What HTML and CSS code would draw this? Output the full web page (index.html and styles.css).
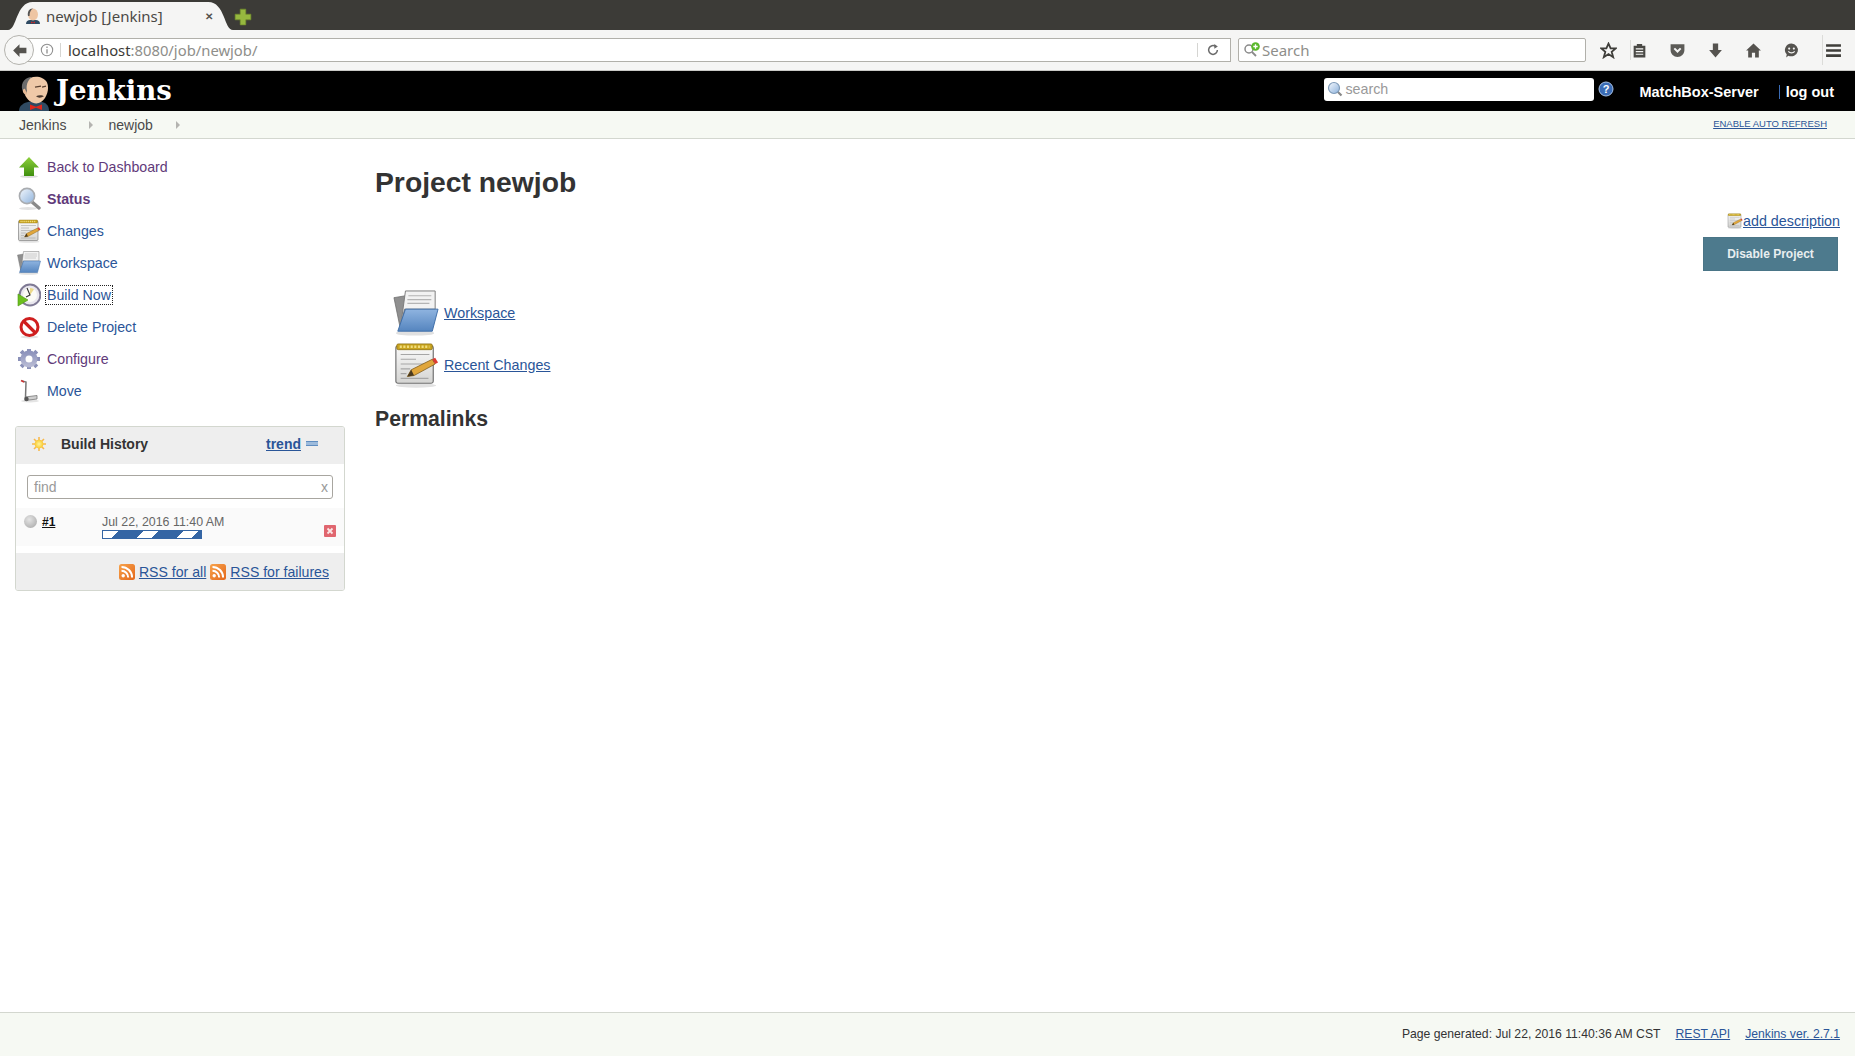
FILE: index.html
```html
<!DOCTYPE html>
<html lang="en">
<head>
    <meta charset="UTF-8">
    <title>newjob [Jenkins]</title>
    <link rel="stylesheet" href="styles.css">
</head>
<body>

  <!-- Shared icons -->
  <svg class="icon-defs" aria-hidden="true">
    <defs>
      <linearGradient id="g-green" x1="0" y1="0" x2="0" y2="1"><stop offset="0" stop-color="#8ed13c"/><stop offset="1" stop-color="#3f8f0e"/></linearGradient>
      <linearGradient id="g-folder" x1="0" y1="0" x2="0" y2="1"><stop offset="0" stop-color="#8fb4e0"/><stop offset="1" stop-color="#5585bf"/></linearGradient>
      <linearGradient id="g-glass" x1="0" y1="0" x2="1" y2="1"><stop offset="0" stop-color="#f4f8fd"/><stop offset="1" stop-color="#8db2dc"/></linearGradient>
      <linearGradient id="g-paper" x1="0" y1="0" x2="0" y2="1"><stop offset="0" stop-color="#fafafa"/><stop offset="1" stop-color="#d4d4d2"/></linearGradient>
      <linearGradient id="g-rss" x1="0" y1="0" x2="1" y2="1"><stop offset="0" stop-color="#f7a24b"/><stop offset="1" stop-color="#e4691c"/></linearGradient>
      <linearGradient id="g-gear" x1="0" y1="0" x2="0" y2="1"><stop offset="0" stop-color="#8f95bd"/><stop offset="1" stop-color="#b5b8d2"/></linearGradient>
      <radialGradient id="g-sun" cx=".5" cy=".5" r=".5"><stop offset="0" stop-color="#fff59a"/><stop offset="1" stop-color="#f8c830"/></radialGradient>

      <symbol id="i-up" viewBox="0 0 24 24">
        <ellipse cx="12" cy="21.5" rx="9" ry="1.5" fill="#ddd"/>
        <path d="M12 2 22 12.5H17V21H7V12.5H2Z" fill="url(#g-green)"/>
      </symbol>
      <symbol id="i-search" viewBox="0 0 24 24">
        <ellipse cx="11" cy="21.5" rx="9" ry="1.5" fill="#e2e2e2"/>
        <path d="M14.5 14.5 22 21" stroke="#8a8a8a" stroke-width="3.4" stroke-linecap="round"/>
        <circle cx="10" cy="9" r="7.6" fill="url(#g-glass)" stroke="#a9acb0" stroke-width="1.6"/>
      </symbol>
      <symbol id="i-notepad" viewBox="0 0 48 48">
        <ellipse cx="24" cy="45.5" rx="21" ry="2.2" fill="#e2e2e2"/>
        <rect x="3" y="4" width="39" height="39" rx="2" fill="url(#g-paper)" stroke="#6f6f6f" stroke-width="1.2"/>
        <rect x="4" y="2" width="37" height="6" rx="1.5" fill="#c9a520" stroke="#8a6d10" stroke-width=".8"/>
        <path d="M7 5H38" stroke="#f1dd7d" stroke-width="2.6" stroke-dasharray="2.2 1.6"/>
        <path d="M8 13H38M8 18H24M8 23H34M8 28H18M8 33H14M8 38H37" stroke="#a6a6a6" stroke-width="1.2"/>
        <path d="M19 29 41 18 44 23 22 35 15 36Z" fill="#e0a63c" stroke="#7d5a1a" stroke-width=".8"/>
        <path d="M41 18 44 16.500 47 21.500 44 23Z" fill="#dc3a32"/>
        <path d="M19 29 15 36 22 35Z" fill="#4a3a20"/>
      </symbol>
      <symbol id="i-folder" viewBox="0 0 48 48">
        <ellipse cx="23" cy="45" rx="20" ry="2.6" fill="#e0e0e0"/>
        <path d="M1 8 13 6V40L8 42Z" fill="#8f8f8f" stroke="#6c6c6c" stroke-width=".8"/>
        <path d="M8 38 13 1H44V20H12Z" fill="#f2f2f2" stroke="#7b7b7b" stroke-width="1"/>
        <path d="M16 6H40M15 10H40M15 14H38" stroke="#b4b4b4" stroke-width="1.2"/>
        <path d="M13 20H47L41 43H5Z" fill="url(#g-folder)" stroke="#3f6ea8" stroke-width="1"/>
      </symbol>
      <symbol id="i-clock" viewBox="0 0 24 24">
        <circle cx="13" cy="12" r="10.4" fill="#e9e7ee" stroke="#7f7a95" stroke-width="2"/>
        <circle cx="13" cy="12" r="7" fill="#fbfbf6"/>
        <path d="M13 12V5A7 7 0 0 1 17 6.300Z" fill="#ecd98a"/>
        <path d="M10 5 13 12 9 14" fill="none" stroke="#333" stroke-width="1.1"/>
        <path d="M1 11 11 17 1 23Z" fill="#6cbf1f" stroke="#4f9711" stroke-width=".6"/>
      </symbol>
      <symbol id="i-delete" viewBox="0 0 24 24">
        <ellipse cx="12.500" cy="22" rx="9" ry="1.500" fill="#e4e4e4"/>
        <circle cx="12.500" cy="12" r="8.500" fill="#fff" stroke="#cf1f1f" stroke-width="3"/>
        <path d="M6.500 6 18.500 18" stroke="#cf1f1f" stroke-width="3.200"/>
      </symbol>
      <symbol id="i-gear" viewBox="0 0 24 24">
        <path d="M12 4V2M12 22V20M4 12H1M23 12H20M6.300 6.300 4.200 4.200M19.800 19.800 17.700 17.700M6.300 17.700 4.200 19.800M19.800 4.200 17.700 6.300" stroke="#8a90b8" stroke-width="4"/>
        <circle cx="12" cy="12" r="6" fill="none" stroke="url(#g-gear)" stroke-width="5"/>
        <circle cx="12" cy="12" r="3" fill="#fff"/>
      </symbol>
      <symbol id="i-move" viewBox="0 0 24 24">
        <ellipse cx="13" cy="22" rx="9" ry="1.500" fill="#e4e4e4"/>
        <path d="M5 2 9 3 8.500 18" fill="none" stroke="#777" stroke-width="1.500"/>
        <path d="M4 1.500 7 3" stroke="#c33" stroke-width="1.500"/>
        <path d="M8 18 20 16.500V20L8 21.500Z" fill="#cfcfcf" stroke="#777" stroke-width=".8"/>
        <circle cx="9.500" cy="20" r="2.200" fill="#555"/>
      </symbol>
      <symbol id="i-rss" viewBox="0 0 16 16">
        <rect width="16" height="16" rx="2.500" fill="url(#g-rss)"/>
        <circle cx="4.200" cy="11.800" r="1.700" fill="#fff"/>
        <path d="M2.500 6.800A6.700 6.700 0 0 1 9.200 13.500M2.500 2.900A10.600 10.600 0 0 1 13.100 13.500" fill="none" stroke="#fff" stroke-width="2"/>
      </symbol>
    </defs>
  </svg>

  <!-- Browser Chrome -->
  <div class="tabstrip">
    <div class="tab">
      <svg class="tab-shape" viewBox="0 0 200 28" preserveAspectRatio="none"><path d="M0 28C8 28 7 0 22 0H178C193 0 192 28 200 28Z" fill="#f5f5f4"/></svg>
      <svg class="tab-favicon" viewBox="0 0 16 16"><path d="M1 16C1 13 3 12 5 12H11C13 12 15 13 15 16Z" fill="#2f4a62"/><ellipse cx="8" cy="6.500" rx="5" ry="6" fill="#eec5a3"/><path d="M3 8C2 3 5 0 8 .5 6 1.500 4.500 4 4.500 8Z" fill="#555"/><path d="M6 13.500 8 14.500 10 13.500V15.500L8 14.800 6 15.500Z" fill="#c62828"/></svg>
      <span class="tab-title">newjob [Jenkins]</span>
      <span class="tab-close">&#10005;</span>
    </div>
    <svg class="tab-new" viewBox="0 0 16 16"><path d="M5.500 1H10.500V5.500H15V10.500H10.500V15H5.500V10.500H1V5.500H5.500Z" fill="#96b83f" stroke="#6f8b2a" stroke-width=".6"/></svg>
  </div>

  <div class="toolbar">
    <div class="back-btn">
      <svg viewBox="0 0 16 16"><path d="M8 2 2 8 8 14V10.500H14.500V5.500H8Z" fill="#55534f"/></svg>
    </div>
    <div class="urlbar">
      <svg class="url-info" viewBox="0 0 16 16"><circle cx="8" cy="8" r="6.500" fill="none" stroke="#8f8f8f" stroke-width="1.200"/><path d="M8 7V12M8 4V5.600" stroke="#8f8f8f" stroke-width="1.500"/></svg>
      <span class="url-text">localhost<span class="url-rest">:8080/job/newjob/</span></span>
      <svg class="url-reload" viewBox="0 0 16 16"><path d="M13 8A5 5 0 1 1 11 4" fill="none" stroke="#6a6a6a" stroke-width="1.700"/><path d="M9.500 1 13.500 4 9.500 6.500Z" fill="#6a6a6a"/></svg>
    </div>
    <div class="searchbar">
      <svg class="search-engine" viewBox="0 0 18 16"><circle cx="6" cy="7" r="4" fill="none" stroke="#8a8a8a" stroke-width="1.500"/><path d="M9 10 13 14" stroke="#8a8a8a" stroke-width="1.800"/><circle cx="12.500" cy="4.500" r="4.300" fill="#5ab82b"/><path d="M12.500 2.300V6.700M10.300 4.500H14.700" stroke="#fff" stroke-width="1.300"/></svg>
      <span>Search</span>
    </div>
    <div class="toolbar-icons">
      <svg viewBox="0 0 16 16"><path d="M8 1.500 10 6H14.800L11 9.200 12.400 14.300 8 11.400 3.600 14.300 5 9.200 1.200 6H6Z" fill="none" stroke="#3f3e3a" stroke-width="1.700"/></svg>
      <span class="toolbar-sep"></span>
      <svg viewBox="0 0 16 16"><path d="M2.500 3.500H5.500V1.800H10.500V3.500H13.500V14.500H2.500Z" fill="#4a4945"/><path d="M4.500 6.500H11.500M4.500 9H11.500M4.500 11.500H11.500" stroke="#f5f5f4" stroke-width="1.100"/></svg>
      <svg viewBox="0 0 16 16"><path d="M1.500 2H14.500V7.500C14.500 11.500 11.500 14 8 14S1.500 11.500 1.500 7.500Z" fill="#5c5b57"/><path d="M5 6 8 9 11 6" fill="none" stroke="#f5f5f4" stroke-width="1.900"/></svg>
      <svg viewBox="0 0 16 16"><path d="M5.500 1.500H10.500V7.500H14L8 14.500 2 7.500H5.500Z" fill="#55534f"/></svg>
      <svg viewBox="0 0 16 16"><path d="M8 1.500 15 8H13V14.500H9.500V10H6.500V14.500H3V8H1Z" fill="#55534f"/></svg>
      <svg viewBox="0 0 16 16"><path d="M8 1.500A6.500 6 0 1 1 5 13L3 14.500 3.500 11.500A6.500 6 0 0 1 8 1.500Z" fill="#55534f"/><circle cx="5.800" cy="6.200" r="1" fill="#f5f5f4"/><circle cx="10.200" cy="6.200" r="1" fill="#f5f5f4"/><path d="M5 8.800C6.500 10.800 9.500 10.800 11 8.800" fill="none" stroke="#f5f5f4" stroke-width="1.100"/></svg>
      <span class="toolbar-sep toolbar-sep-wide"></span>
      <svg viewBox="0 0 16 16"><path d="M1 3.200H15M1 8H15M1 12.800H15" stroke="#3f3e3a" stroke-width="2.400"/></svg>
    </div>
  </div>

  <!-- Jenkins Header -->
  <header class="page-head">
    <a class="logo" href="#">
      <svg class="logo-head" viewBox="1 2 32 38" preserveAspectRatio="none">
        <path d="M2 40C2 34 7 31 12 30L24 30C29 31 32 34 32 40Z" fill="#2f4a62"/>
        <path d="M9 8C13 1 26 1 30 9 32 14 31 21 28 26 25 31 20 33 16 31 11 29 8 24 7 19Z" fill="#efc9a8"/>
        <path d="M9 22C4 20 3 9 9 5 12 3 14 3 15 3 10 7 9 13 10 18Z" fill="#6b6b6b"/>
        <path d="M8 16C6 15 5 19 7 21 8 22 9 22 10 21Z" fill="#e5b894"/>
        <path d="M18 14 24 13M25 14 29 13" stroke="#5a4030" stroke-width="1.300"/>
        <path d="M19 24C22 22 26 23 27 24 24 26 21 26 19 24Z" fill="#4a3a30"/>
        <path d="M13 33 19 35.500 25 33V39L19 36.500 13 39Z" fill="#e0281c"/>
      </svg>
      <span class="logo-text">Jenkins</span>
    </a>
    <div class="head-right">
      <div class="head-search">
        <svg viewBox="0 0 16 16"><path d="M10 10 14.500 14.500" stroke="#888" stroke-width="2.200"/><circle cx="7" cy="7" r="5.500" fill="url(#g-glass)" stroke="#7e9ab8" stroke-width="1.200"/></svg>
        <span>search</span>
      </div>
      <svg class="head-help" viewBox="0 0 16 16"><circle cx="8" cy="8" r="7" fill="#3b6cb5" stroke="#a9c2e6" stroke-width="1"/><text x="8" y="12" text-anchor="middle" class="head-help-mark">?</text></svg>
      <a class="head-user" href="#">MatchBox-Server</a>
      <span class="head-logout"><a href="#">log out</a></span>
    </div>
  </header>

  <!-- Breadcrumbs -->
  <div class="breadcrumbs">
    <a href="#">Jenkins</a>
    <span class="crumb-arrow"></span>
    <a href="#">newjob</a>
    <span class="crumb-arrow"></span>
    <a class="auto-refresh" href="#">ENABLE AUTO REFRESH</a>
  </div>

  <!-- Page Body -->
  <div class="page-body">
    <aside class="side-panel">
      <ul class="tasks">
        <li><svg><use href="#i-up"/></svg><a class="visited" href="#">Back to Dashboard</a></li>
        <li><svg><use href="#i-search"/></svg><a class="visited current" href="#">Status</a></li>
        <li><svg><use href="#i-notepad"/></svg><a href="#">Changes</a></li>
        <li><svg><use href="#i-folder"/></svg><a href="#">Workspace</a></li>
        <li><svg><use href="#i-clock"/></svg><a class="focused" href="#">Build Now</a></li>
        <li><svg><use href="#i-delete"/></svg><a href="#">Delete Project</a></li>
        <li><svg><use href="#i-gear"/></svg><a class="visited" href="#">Configure</a></li>
        <li><svg><use href="#i-move"/></svg><a href="#">Move</a></li>
      </ul>

      <div class="history">
        <div class="history-head">
          <svg class="history-sun" viewBox="0 0 16 16"><path d="M8 0V16M0 8H16M2.300 2.300 13.700 13.700M2.300 13.700 13.700 2.300" stroke="#f8b84a" stroke-width="1.800"/><circle cx="8" cy="8" r="5" fill="url(#g-sun)"/></svg>
          <span class="history-title">Build History</span>
          <a class="history-trend" href="#">trend</a>
          <span class="history-minus"></span>
        </div>
        <div class="history-find">
          <div class="find-box"><span>find</span><span>x</span></div>
        </div>
        <div class="history-row">
          <span class="ball"></span>
          <a class="build-no" href="#">#1</a>
          <div class="build-info">
            <div class="build-date">Jul 22, 2016 11:40 AM</div>
            <div class="progress"></div>
          </div>
          <svg class="build-stop" viewBox="0 0 12 12"><rect width="12" height="12" rx="1" fill="#e0666f"/><path d="M3.500 3.500 8.500 8.500M8.500 3.500 3.500 8.500" stroke="#fbe6e6" stroke-width="1.800"/></svg>
        </div>
        <div class="history-foot">
          <svg><use href="#i-rss"/></svg><a href="#">RSS for all</a>
          <svg><use href="#i-rss"/></svg><a href="#">RSS for failures</a>
        </div>
      </div>
    </aside>

    <main class="main-panel">
      <div class="main-actions">
        <div class="add-desc">
          <svg><use href="#i-notepad"/></svg><a href="#">add description</a>
        </div>
        <button class="disable-btn">Disable Project</button>
      </div>
      <h1>Project newjob</h1>
      <ul class="main-links">
        <li><svg><use href="#i-folder"/></svg><a href="#">Workspace</a></li>
        <li><svg><use href="#i-notepad"/></svg><a href="#">Recent Changes</a></li>
      </ul>
      <h2>Permalinks</h2>
    </main>
  </div>

  <!-- Footer -->
  <footer class="page-foot">
    <span>Page generated: Jul 22, 2016 11:40:36 AM CST</span>
    <a href="#">REST API</a>
    <a href="#">Jenkins ver. 2.7.1</a>
  </footer>

</body>
</html>
```

FILE: styles.css
```css
/* General Page Styling */
html, body {
  height: 100%;
}

body {
  font-family: 'Liberation Sans', Arial, sans-serif;
  font-size: 14px;
  color: #333;
  background-color: white;
  margin: 0;
  padding: 0;
  display: flex;
  flex-direction: column;
  overflow: hidden;
}

a {
  color: #2a5598;
}

ul {
  list-style-type: none;
  margin: 0;
  padding: 0;
}

.icon-defs {
  position: absolute;
  width: 0;
  height: 0;
}

/* Browser Chrome */
.tabstrip {
  height: 30px;
  flex: none;
  background-color: #3c3b37;
  display: flex;
  align-items: flex-end;
  padding-left: 8px;
}

.tab {
  position: relative;
  width: 225px;
  height: 28px;
  box-sizing: border-box;
  padding: 0 20px 0 17px;
  display: flex;
  align-items: center;
  font-family: 'Noto Sans', sans-serif;
  font-size: 15px;
  color: #4a4945;
}

.tab-shape {
  position: absolute;
  top: 0;
  left: 0;
  width: 100%;
  height: 100%;
}

.tab-favicon {
  position: relative;
  width: 16px;
  height: 16px;
  margin-right: 5px;
}

.tab-title {
  position: relative;
  flex: 1;
}

.tab-close {
  position: relative;
  font-size: 10px;
  font-weight: bold;
  color: #55534f;
}

.tab-new {
  width: 18px;
  height: 18px;
  margin: 0 0 4px 1px;
}

.toolbar {
  height: 41px;
  flex: none;
  box-sizing: border-box;
  background-color: #f5f5f4;
  display: flex;
  align-items: center;
  padding-left: 4px;
  border-bottom: 1px solid #c9c9c6;
}

.back-btn {
  width: 30px;
  height: 30px;
  box-sizing: border-box;
  border: 1px solid #b4b3ae;
  border-radius: 50%;
  background: #f7f7f6;
  display: flex;
  align-items: center;
  justify-content: center;
  position: relative;
  z-index: 1;
  flex: none;
}

.back-btn svg {
  width: 17px;
  height: 17px;
}

.urlbar {
  width: 1205px;
  height: 24px;
  flex: none;
  box-sizing: border-box;
  margin-left: -8px;
  padding: 0 10px 0 14px;
  background: white;
  border: 1px solid #b1b0aa;
  border-left: none;
  display: flex;
  align-items: center;
  font-family: 'Noto Sans', sans-serif;
  font-size: 14.8px;
  color: #3c3b37;
}

.url-info {
  width: 14px;
  height: 14px;
  padding-right: 6px;
  margin-right: 7px;
  border-right: 1px solid #d5d5d2;
}

.url-text {
  flex: 1;
}

.url-rest {
  color: #8e8e8a;
}

.url-reload {
  width: 14px;
  height: 14px;
  padding-left: 8px;
  border-left: 1px solid #d5d5d2;
}

.searchbar {
  width: 348px;
  height: 24px;
  flex: none;
  box-sizing: border-box;
  margin-left: 7px;
  padding-left: 4px;
  background: white;
  border: 1px solid #b1b0aa;
  border-radius: 2px;
  display: flex;
  align-items: center;
  gap: 1px;
  font-family: 'Noto Sans', sans-serif;
  font-size: 15px;
  color: #8e8e8a;
}

.search-engine {
  width: 18px;
  height: 16px;
}

.toolbar-icons {
  flex: 1;
  display: flex;
  align-items: center;
  padding-left: 14px;
}

.toolbar-icons svg {
  width: 17px;
  height: 17px;
  margin-right: 21px;
  flex: none;
}

.toolbar-sep {
  width: 1px;
  height: 20px;
  background: #dcdcd9;
  margin: 0 0 0 -8px;
}

.toolbar-sep-wide {
  height: 30px;
  margin: 0 2px 0 1px;
}

/* Jenkins Header */
.page-head {
  height: 40px;
  flex: none;
  background-color: black;
  display: flex;
  justify-content: space-between;
  align-items: center;
}

.logo {
  display: flex;
  align-items: flex-end;
  height: 100%;
  padding-left: 18px;
  text-decoration: none;
}

.logo-head {
  width: 32px;
  height: 35px;
  display: block;
}

.logo-text {
  font-family: 'DejaVu Serif', serif;
  font-weight: bold;
  font-size: 27.6px;
  line-height: 36px;
  color: white;
  margin: 0 0 2px 6px;
}

.head-right {
  display: flex;
  align-items: center;
  padding-right: 21px;
}

.head-search {
  width: 270px;
  height: 23px;
  box-sizing: border-box;
  background: white;
  border-radius: 3px;
  padding-left: 3px;
  display: flex;
  align-items: center;
  gap: 2px;
  color: #999;
  font-size: 14.3px;
  margin-bottom: 4px;
}

.head-search svg {
  width: 16px;
  height: 16px;
}

.head-help {
  width: 16px;
  height: 16px;
  margin: 0 25px 4px 4px;
}

.head-help-mark {
  font-family: 'Liberation Sans', sans-serif;
  font-size: 11px;
  font-weight: bold;
  fill: white;
}

.head-user,
.head-logout a {
  color: white;
  font-weight: bold;
  font-size: 14.5px;
  text-decoration: none;
  margin-top: 2px;
}

.head-logout {
  margin-left: 20px;
  padding-left: 6px;
  border-left: 1px solid #3b6cb5;
  line-height: 14px;
  margin-top: 2px;
}

/* Breadcrumbs */
.breadcrumbs {
  height: 28px;
  flex: none;
  box-sizing: border-box;
  background-color: #f6f9f3;
  border-bottom: 1px solid #d3d7cf;
  display: flex;
  align-items: center;
  padding: 0 28px 0 19px;
}

.breadcrumbs a {
  color: #4a4a4a;
  text-decoration: none;
}

.crumb-arrow {
  width: 0;
  height: 0;
  border-left: 4px solid #b4b4b0;
  border-top: 4px solid transparent;
  border-bottom: 4px solid transparent;
  margin: 0 15px 0 23px;
}

.breadcrumbs .auto-refresh {
  margin: 0 0 2px auto;
  font-size: 9.5px;
  color: #2a5598;
  text-decoration: underline;
}

/* Page Body */
.page-body {
  flex: 1;
  display: flex;
  min-height: 0;
}

.side-panel {
  width: 360px;
  flex: none;
  box-sizing: border-box;
  padding: 12px 0 0 15px;
}

.tasks {
  font-size: 14.2px;
}

.tasks li {
  height: 32px;
  display: flex;
  align-items: center;
}

.tasks svg {
  width: 24px;
  height: 24px;
  margin: 0 6px 0 2px;
  flex: none;
}

.tasks a {
  text-decoration: none;
  padding: 1px;
  margin-left: -1px;
}

.tasks a.visited {
  color: #613a7a;
}

.tasks a.current {
  font-weight: bold;
}

.tasks a.focused {
  outline: 1px dotted #222;
}

/* Build History */
.history {
  width: 330px;
  box-sizing: border-box;
  margin-top: 19px;
  border: 1px solid #d3d7cf;
  border-radius: 3px;
  overflow: hidden;
  background: white;
}

.history-head {
  height: 37px;
  box-sizing: border-box;
  background: #eeeeee;
  display: flex;
  align-items: center;
  padding: 0 0 4px 16px;
  font-weight: bold;
}

.history-sun {
  width: 14px;
  height: 14px;
  margin-right: 15px;
}

.history-title {
  flex: 1;
  color: #333;
}

.history-trend {
  margin-right: 5px;
}

.history-minus {
  width: 12px;
  height: 3px;
  margin-right: 26px;
  background: #9dbbdc;
  border: 1px solid #5f8dc0;
  border-left-width: 0;
  border-right-width: 0;
}

.history-find {
  padding: 11px 11px 9px;
}

.find-box {
  height: 24px;
  box-sizing: border-box;
  border: 1px solid #a8a6a0;
  border-radius: 3px;
  padding: 0 4px 0 6px;
  display: flex;
  justify-content: space-between;
  align-items: center;
  color: #999;
}

.history-row {
  height: 38px;
  background: #fafafa;
  display: flex;
  position: relative;
  padding-left: 8px;
}

.ball {
  width: 13px;
  height: 13px;
  margin-top: 7px;
  border-radius: 50%;
  background: radial-gradient(circle at 40% 35%, #e4e4e4, #a3a3a3);
  flex: none;
}

.build-no {
  width: 60px;
  margin-left: 5px;
  margin-top: 7px;
  font-size: 12px;
  font-weight: bold;
  color: #111;
  flex: none;
}

.build-info {
  flex: 1;
  margin-top: 7px;
}

.build-date {
  font-size: 12.4px;
  line-height: 14px;
  color: #666;
}

.progress {
  width: 100px;
  height: 9px;
  box-sizing: border-box;
  margin-top: 1px;
  border: 1px solid #3465a4;
  background: repeating-linear-gradient(135deg, white 0, white 11px, #3465a4 11px, #3465a4 28.3px);
}

.build-stop {
  width: 12px;
  height: 12px;
  margin: 17px 8px 0 0;
}

.history-foot {
  height: 37px;
  margin-top: 7px;
  background: #eeeeee;
  display: flex;
  align-items: center;
  justify-content: flex-end;
  padding-right: 15px;
  font-size: 14.1px;
}

.history-foot svg {
  width: 16px;
  height: 16px;
  margin: 0 4px 0 4px;
}

/* Main Panel */
.main-panel {
  flex: 1;
  padding-right: 15px;
  padding-left: 15px;
}

.main-actions {
  float: right;
  margin-top: 70px;
  display: flex;
  flex-direction: column;
  align-items: flex-end;
}

.add-desc {
  display: flex;
  align-items: flex-end;
  height: 20px;
  font-size: 14.3px;
}

.add-desc svg {
  width: 16px;
  height: 16px;
}

.disable-btn {
  margin: 8px 2px 0 0;
  width: 135px;
  height: 34px;
  border: 1px solid #4a7587;
  background-color: #4d7a8d;
  color: #e8eef0;
  font-family: 'Liberation Sans', sans-serif;
  font-size: 12px;
  font-weight: bold;
}

h1 {
  margin: 24px 0 0;
  font-size: 28.3px;
  line-height: 38px;
}

.main-links {
  margin: 86px 0 0 18px;
  font-size: 14.3px;
}

.main-links li {
  height: 52px;
  display: flex;
  align-items: center;
}

.main-links svg {
  width: 46px;
  height: 46px;
  margin-right: 5px;
}

h2 {
  margin: 14px 0 0;
  font-size: 21.2px;
  line-height: 28px;
}

/* Footer */
.page-foot {
  height: 44px;
  flex: none;
  box-sizing: border-box;
  background-color: #f6f9f3;
  border-top: 1px solid #d3d7cf;
  display: flex;
  justify-content: flex-end;
  align-items: center;
  gap: 15px;
  padding: 0 15px 2px 0;
  font-size: 12.2px;
}
```
